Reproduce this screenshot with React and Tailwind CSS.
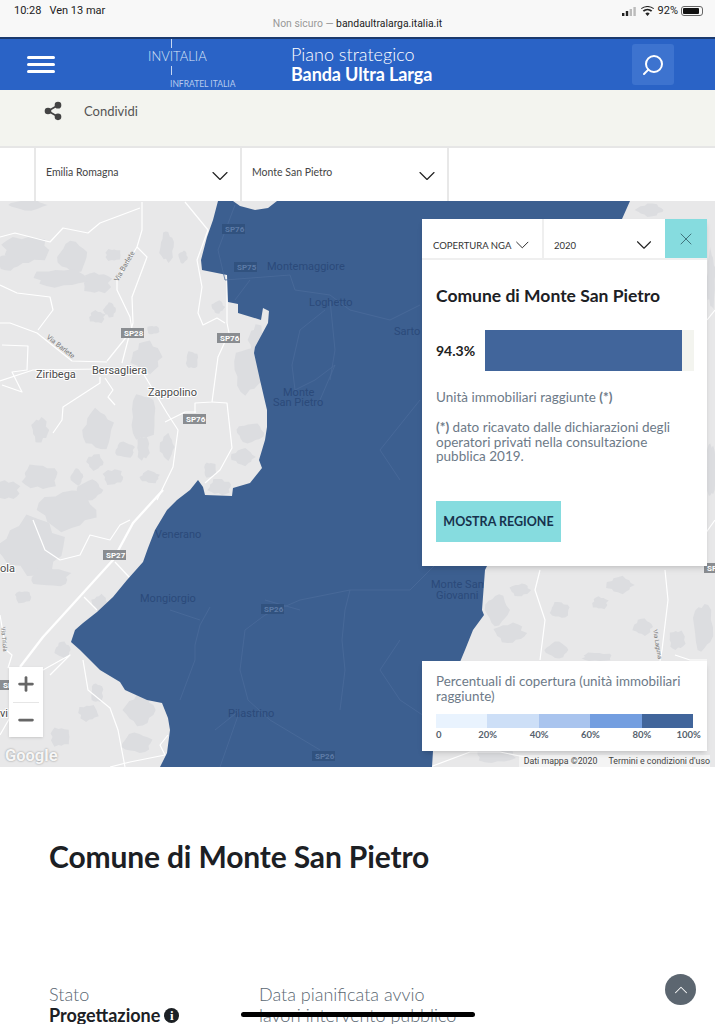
import { ChevronDown, X, Search, Plus, Minus, ChevronUp, Share2 } from 'lucide-react';

const BLUE_AREA =
  '218,201 233,201 240,206 255,210 268,208 277,201 630,201 622,219 600,300 560,400 520,480 490,550 487,566 485,570 482,610 484,615 473,630 465,650 460,662 445,705 433,751 432,767 160,767 167,753 170,730 168,718 162,703 147,700 125,690 120,682 100,670 80,650 71,642 75,630 83,623 97,612 113,597 127,580 143,562 148,548 155,530 167,510 177,500 190,490 198,480 203,487 205,495 232,496 233,488 250,483 262,468 259,460 265,440 267,427 267,410 260,380 254,353 255,347 268,323 269,311 263,308 261,320 238,313 238,304 228,302 227,275 202,270 201,260 207,237 213,220';

// cx, cy, rx, ry of the darker land patches
const BLOBS = [
  [25, 250, 26, 16], [8, 262, 16, 9], [73, 257, 17, 17], [97, 283, 16, 12], [60, 278, 30, 10], [28, 205, 20, 6],
  [167, 247, 8, 17], [113, 255, 9, 7], [183, 257, 5, 7], [110, 310, 7, 8], [97, 317, 9, 7], [153, 330, 7, 5],
  [218, 307, 7, 7], [147, 357, 17, 17], [192, 360, 7, 10], [248, 370, 16, 27], [257, 340, 9, 17], [98, 430, 17, 22],
  [143, 417, 14, 27], [40, 430, 9, 14], [167, 447, 8, 14], [125, 450, 11, 9], [143, 448, 7, 14], [95, 462, 9, 9],
  [77, 477, 7, 9], [40, 477, 20, 14], [113, 477, 11, 9], [90, 490, 14, 11], [150, 477, 11, 7], [7, 490, 14, 11],
  [250, 433, 15, 11], [243, 457, 13, 9], [220, 487, 13, 9], [210, 470, 7, 9], [67, 510, 32, 22], [33, 547, 37, 32],
  [50, 577, 22, 11], [23, 597, 9, 7], [100, 603, 9, 9], [63, 650, 9, 9], [97, 693, 7, 11], [88, 713, 11, 9],
  [140, 710, 17, 17], [137, 743, 17, 11], [60, 737, 11, 11], [510, 633, 17, 11], [557, 650, 13, 9], [600, 603, 9, 7],
  [677, 640, 9, 11], [497, 610, 13, 17], [643, 627, 11, 9], [597, 657, 17, 5], [703, 627, 11, 27], [650, 210, 15, 7],
  [711, 280, 5, 32], [711, 470, 5, 32], [520, 590, 11, 7], [620, 585, 15, 9], [560, 610, 11, 9], [495, 755, 22, 9],
];

function blobPoints([cx, cy, rx, ry], seed) {
  const pts = [];
  for (let i = 0; i < 18; i++) {
    const a = (i / 18) * Math.PI * 2;
    const r = 0.86 + 0.12 * Math.sin(i * 1.3 + seed * 1.7) + 0.07 * Math.cos(i * 3.1 + seed);
    pts.push(`${(cx + Math.cos(a) * rx * r).toFixed(1)},${(cy + Math.sin(a) * ry * r).toFixed(1)}`);
  }
  return pts.join(' ');
}

const ROADS = [
  '142,202 142,230 137,247 147,257 132,297 133,323 128,340 122,363',
  '137,247 117,280 117,290 130,317 132,330 107,361',
  '0,237 15,233 50,242 63,228 88,233 100,223 140,208',
  '0,285 17,293 50,297 53,310 38,330',
  '0,323 10,323 37,333 72,361 107,362',
  '100,369 33,370 0,381',
  '185,202 208,230 197,260 202,287 198,313 203,325 217,318 225,323',
  '227,275 227,323 229,333 218,357 212,402 195,403 195,413',
  '212,402 227,403 232,448 220,470 205,483',
  '143,373 167,413 178,430 173,467 157,500',
  '100,377 100,383 63,407 62,420 53,433',
  '105,378 113,390 108,397 115,405',
  '2,345 28,346 27,370 12,372 22,392 2,385',
  '165,422 185,412 196,412',
  '163,490 133,523 113,560 83,593 43,637 20,667',
  '84,597 97,610',
  '115,562 130,578',
  '33,520 45,550 60,560 80,555 90,535 110,540 120,525 130,520',
  '0,615 6,650 12,655 8,668',
  '83,660 88,690 110,708 118,730 125,767',
  '168,735 160,745 165,755 130,762 110,767',
  '0,735 20,700 43,670 70,655 50,675',
  '540,570 535,590 545,620 540,660',
  '665,570 668,600 662,650 660,661',
  '430,767 470,752 500,752 540,760',
  '707,320 715,310',
  '715,520 690,555 707,560',
  '707,660 690,660 675,655',
];

const BLUE_ROADS = [
  '235,205 218,250 225,280 290,275 295,290 330,295 350,310 390,320 420,305',
  '325,310 300,330 292,365 295,390 315,380 335,365 320,400',
  '330,300 335,350 330,380',
  '210,607 200,625 195,645 195,660 180,700',
  '500,500 410,590 350,590 300,600 265,615 245,630 240,670 248,700 270,720 320,750',
  '350,590 345,610 342,640 345,670 340,710',
  '170,610 200,620',
  '300,610 265,600',
  '215,730 240,710 220,767',
  '400,640 380,670 400,700 430,720',
  '250,280 235,300',
  '420,400 380,450 400,480',
];

const LIGHT_LABELS = [
  { x: 36, y: 378, t: 'Ziribega' },
  { x: 92, y: 374, t: 'Bersagliera' },
  { x: 148, y: 396, t: 'Zappolino' },
  { x: 0, y: 572, t: 'ola' },
  { x: 0, y: 717, t: 'vi' },
];

const DARK_LABELS = [
  { x: 267, y: 270, t: 'Montemaggiore' },
  { x: 309, y: 306, t: 'Loghetto' },
  { x: 394, y: 335, t: 'Sarto' },
  { x: 283, y: 396, t: 'Monte' },
  { x: 273, y: 406, t: 'San Pietro' },
  { x: 155, y: 538, t: 'Venerano' },
  { x: 140, y: 602, t: 'Mongiorgio' },
  { x: 228, y: 717, t: 'Pilastrino' },
  { x: 431, y: 588, t: 'Monte San' },
  { x: 436, y: 599, t: 'Giovanni' },
];

const SHIELDS = [
  { x: 121, y: 328, t: 'SP28' },
  { x: 217, y: 333, t: 'SP76' },
  { x: 183, y: 414, t: 'SP76' },
  { x: 103, y: 550, t: 'SP27' },
  { x: 704, y: 563, t: 'SP' },
  { x: 0, y: 680, t: 'SP' },
];

const DARK_SHIELDS = [
  { x: 222, y: 224, t: 'SP76' },
  { x: 234, y: 262, t: 'SP75' },
  { x: 261, y: 604, t: 'SP26' },
  { x: 312, y: 751, t: 'SP26' },
];

const LEGEND = ['bg-[#e9f3fe]', 'bg-[#cddff7]', 'bg-[#a9c4ee]', 'bg-[#739ee0]', 'bg-[#41659b]'];
const LEGEND_LABELS = ['0', '20%', '40%', '60%', '80%', '100%'];

function MapDrawing() {
  return (
    <svg className="block w-full h-full" viewBox="0 201 715 566">
      <rect x="0" y="201" width="715" height="566" fill="#e8e8e9" />
      {BLOBS.map((b, i) => (
        <polygon key={i} points={blobPoints(b, i)} fill="#dcdde0" />
      ))}
      {ROADS.map((p, i) => (
        <polyline key={i} points={p} fill="none" stroke="#fff" strokeWidth={i === 14 ? 2.4 : 1.2} strokeLinejoin="round" />
      ))}
      {LIGHT_LABELS.map(l => (
        <text key={l.t} x={l.x} y={l.y} fontSize="11" fill="#4a4a4a" stroke="#fff" strokeWidth="2" paintOrder="stroke" fontFamily="Roboto, sans-serif">{l.t}</text>
      ))}
      <text x="0" y="0" transform="translate(46,338) rotate(38)" fontSize="7" fill="#777" fontFamily="Roboto, sans-serif">Via Barlete</text>
      <text x="0" y="0" transform="translate(118,282) rotate(-60)" fontSize="7" fill="#777" fontFamily="Roboto, sans-serif">Via Barlete</text>
      <text x="0" y="0" transform="translate(1,627) rotate(85)" fontSize="6" fill="#777" fontFamily="Roboto, sans-serif">Via Triola</text>
      <text x="0" y="0" transform="translate(653,630) rotate(80)" fontSize="6" fill="#777" fontFamily="Roboto, sans-serif">Via Laguna</text>
      {SHIELDS.map(s => (
        <g key={s.x + '-' + s.y}>
          <rect x={s.x} y={s.y} width="23" height="10" fill="#8a8d91" />
          <text x={s.x + 3} y={s.y + 8} fontSize="8" fontWeight="700" fill="#fff" fontFamily="Roboto, sans-serif">{s.t}</text>
        </g>
      ))}

      <polygon points={BLUE_AREA} fill="#3c5f90" />
      {BLUE_ROADS.map((p, i) => (
        <polyline key={i} points={p} fill="none" stroke="#4a6b9a" strokeWidth="0.8" />
      ))}
      {DARK_LABELS.map(l => (
        <text key={l.t} x={l.x} y={l.y} fontSize="11" fill="#2b4a7a" fontFamily="Roboto, sans-serif">{l.t}</text>
      ))}
      {DARK_SHIELDS.map(s => (
        <g key={s.x + '-' + s.y}>
          <rect x={s.x} y={s.y} width="23" height="10" fill="#31527f" />
          <text x={s.x + 3} y={s.y + 8} fontSize="8" fontWeight="700" fill="#5d7ba7" fontFamily="Roboto, sans-serif">{s.t}</text>
        </g>
      ))}
    </svg>
  );
}

function SelectCell({ label, className }) {
  return (
    <div className={`flex items-center justify-between border-r-2 border-[#e8e8e8] ${className}`}>
      <span className="text-[10.5px] text-[#444] -mt-[4px]">{label}</span>
      <ChevronDown className="w-[28px] h-[28px] text-[#222] mt-[2px]" strokeWidth={1} />
    </div>
  );
}

export default function App() {
  return (
    <div className="relative h-[1024px] overflow-hidden bg-white font-['Lato','Noto_Sans',sans-serif]">
      {/* Safari bar */}
      <div className="h-[37px] bg-[#f8f8f8] relative font-['Roboto',sans-serif]">
        <div className="flex items-center justify-between pl-[14px] pr-[12px] pt-[3px] text-[11px] text-[#222]">
          <div className="flex gap-[8px]">
            <span>10:28</span>
            <span>Ven 13 mar</span>
          </div>
          <div className="flex items-center gap-[3px]">
            <svg width="14" height="9" viewBox="0 0 14 9">
              <rect x="0" y="6" width="2.4" height="3" fill="#222" />
              <rect x="3.8" y="4" width="2.4" height="5" fill="#222" />
              <rect x="7.6" y="2" width="2.4" height="7" fill="#bbb" />
              <rect x="11.4" y="0" width="2.4" height="9" fill="#bbb" />
            </svg>
            <svg width="13" height="10" viewBox="0 0 24 18" className="ml-[2px] mr-[1px]">
              <path d="M12 18 L8 13.5 A6 6 0 0 1 16 13.5 Z M5.5 10.5 A10 10 0 0 1 18.5 10.5 L20.8 8 A13.5 13.5 0 0 0 3.2 8 Z M1 5.5 A17 17 0 0 1 23 5.5 L24 4 A19 19 0 0 0 0 4 Z" fill="#222" />
            </svg>
            <span>92%</span>
            <div className="w-[22px] h-[10px] rounded-[3px] border border-[#666] p-[1px]">
              <div className="h-full w-[90%] bg-[#111] rounded-[1px]" />
            </div>
          </div>
        </div>
        <div className="text-center text-[10.4px] leading-[12px] -mt-[2px] text-[#999]">
          Non sicuro — <span className="text-[#222]">bandaultralarga.italia.it</span>
        </div>
      </div>

      {/* Header */}
      <header className="relative h-[53px] bg-[#2a63c6] border-t-2 border-[#1b3a6e] flex items-center pl-[27px] pr-[41px] overflow-hidden">
        <div className="flex flex-col gap-[4px] w-[28px]">
          <span className="h-[3px] bg-white rounded-full" />
          <span className="h-[3px] bg-white rounded-full" />
          <span className="h-[3px] bg-white rounded-full" />
        </div>
        <div className="relative w-[237px] h-full">
          <span className="absolute left-[93px] top-[8px] text-[13px] font-light text-[#dbe6f7]">INVITALIA</span>
          <span className="absolute left-[116px] top-0 w-px h-[9px] bg-[#c6d7f2]" />
          <span className="absolute left-[116px] top-[27px] w-px h-[9px] bg-[#c6d7f2]" />
          <span className="absolute left-[115px] top-[39px] text-[8.5px] text-[#b7cbee] whitespace-nowrap">INFRATEL ITALIA</span>
        </div>
        <div className="flex-1 text-white text-[18px] leading-[20px] -mt-[2px] -ml-px">
          <div className="font-light">Piano strategico</div>
          <div className="font-bold tracking-[-0.1px]">Banda Ultra Larga</div>
        </div>
        <button className="w-[42px] h-[41px] rounded-[3px] bg-[#3d73cf] flex items-center justify-center text-white">
          <Search className="w-[24px] h-[24px] -scale-x-100" strokeWidth={2} />
        </button>
      </header>

      {/* Share bar */}
      <div className="h-[58px] bg-[#f3f4ef] border-b-2 border-[#e6e6e6] flex items-start pl-[43px] pt-[11px] gap-[21px]">
        <Share2 className="w-[20px] h-[20px] text-[#444] fill-[#444]" strokeWidth={2} />
        <span className="text-[13px] leading-[20px] text-[#555]">Condividi</span>
      </div>

      {/* Selects */}
      <div className="h-[53px] flex bg-white">
        <div className="w-[36px] border-r-2 border-[#e8e8e8]" />
        <SelectCell label="Emilia Romagna" className="w-[206px] pl-[10px] pr-[6px]" />
        <SelectCell label="Monte San Pietro" className="w-[207px] pl-[10px] pr-[6px]" />
      </div>

      {/* Map */}
      <section className="relative h-[566px] overflow-hidden">
        <MapDrawing />

        {/* Zoom controls */}
        <div className="absolute left-[9px] top-[466px] w-[34px] h-[70px] bg-white flex flex-col items-center text-[#666] shadow-sm">
          <div className="flex-1 flex items-center justify-center">
            <Plus className="w-[22px] h-[22px]" strokeWidth={3} />
          </div>
          <div className="w-[26px] h-px bg-[#e6e6e6]" />
          <div className="flex-1 flex items-center justify-center">
            <Minus className="w-[22px] h-[22px]" strokeWidth={3} />
          </div>
        </div>
        <span className="absolute left-[5px] top-[543px] text-[16.5px] font-bold text-white/90 font-['Roboto',sans-serif] [text-shadow:0_0_2px_#888]">Google</span>
        <div className="absolute right-[5px] bottom-0 flex gap-[11px] text-[8.8px] leading-[11px] pt-[1px] pl-[5px] text-[#444] bg-white/50 font-['Roboto',sans-serif]">
          <span>Dati mappa ©2020</span>
          <span>Termini e condizioni d'uso</span>
        </div>

        {/* Info panel */}
        <div className="absolute left-[422px] top-[18px] w-[285px] h-[347px] bg-white shadow-md">
          <div className="flex h-[41px] border-b-2 border-[#efefef]">
            <div className="w-[122px] border-r-2 border-[#efefef] pl-[11px] pr-[8px] pt-[16px] flex items-center justify-between">
              <span className="text-[9.5px] text-[#333] whitespace-nowrap">COPERTURA NGA</span>
              <ChevronDown className="w-[26px] h-[26px] text-[#222] -mt-[3px]" strokeWidth={1} />
            </div>
            <div className="w-[121px] pl-[10px] pr-[8px] pt-[16px] flex items-center justify-between">
              <span className="text-[9.5px] text-[#333]">2020</span>
              <ChevronDown className="w-[26px] h-[26px] text-[#222] -mt-[3px]" strokeWidth={1} />
            </div>
            <div className="w-[42px] bg-[#86dcdf] flex items-center justify-center">
              <X className="w-[20px] h-[20px] text-[#33606a]" strokeWidth={1} />
            </div>
          </div>
          <div className="px-[14px] pt-[26px]">
            <h2 className="text-[17.5px] leading-[20px] font-bold text-[#1c2024]">Comune di Monte San Pietro</h2>
            <div className="flex items-center mt-[24px] -mr-px">
              <span className="w-[49px] text-[14px] font-bold text-[#222]">94.3%</span>
              <div className="flex-1 h-[41px] bg-[#f3f4ef]">
                <div className="h-full bg-[#41659b]" style={{ width: '94.3%' }} />
              </div>
            </div>
            <p className="mt-[18px] text-[13.5px] leading-[17px] text-[#6d7a88]">
              Unità immobiliari raggiunte <b className="font-bold">(*)</b>
            </p>
            <p className="mt-[14px] text-[13.5px] leading-[14.5px] text-[#6d7a88]">
              <b className="font-bold">(*)</b> dato ricavato dalle dichiarazioni degli operatori privati nella consultazione pubblica 2019.
            </p>
            <button className="mt-[37px] w-[125px] h-[41px] pt-[3px] bg-[#86dcdf] text-[12.5px] font-bold text-[#17324d]">MOSTRA REGIONE</button>
          </div>
        </div>

        {/* Legend */}
        <div className="absolute left-[422px] top-[460px] w-[285px] h-[90px] bg-white shadow-md px-[14px] pt-[13px]">
          <p className="text-[13.4px] leading-[15px] text-[#6d7a88]">Percentuali di copertura (unità immobiliari raggiunte)</p>
          <div className="flex h-[14px] mt-[10px] w-[257px]">
            {LEGEND.map(c => (
              <div key={c} className={`flex-1 ${c}`} />
            ))}
          </div>
          <div className="flex w-[266px] text-[9.5px] leading-[12px] mt-px font-bold text-[#56616d]">
            {LEGEND_LABELS.map((l, i) => (
              <span key={l} className={i === 0 ? 'w-[26px]' : i === 5 ? 'ml-[9px]' : 'w-[51.4px] text-center'}>{l}</span>
            ))}
          </div>
        </div>
      </section>

      {/* Below the map */}
      <main className="px-[49px] pt-[69px]">
        <h1 className="text-[30px] leading-[40px] font-bold tracking-[-0.15px] text-[#1c2024]">Comune di Monte San Pietro</h1>
        <div className="flex gap-[62px] mt-[108px] text-[18px] leading-[21px]">
          <div className="w-[148px]">
            <div className="text-[#5a6772] font-light">Stato</div>
            <div className="flex items-center gap-[4px] font-bold text-[#1c2024]">
              Progettazione
              <span className="w-[15px] h-[15px] rounded-full bg-[#1c2024] text-white text-[13px] leading-[15px] text-center font-bold font-['Liberation_Serif',serif]">i</span>
            </div>
          </div>
          <div className="w-[220px] text-[#5a6772] font-light">
            <div>Data pianificata avvio</div>
            <div>lavori intervento pubblico</div>
          </div>
        </div>
      </main>

      {/* Scroll to top */}
      <button className="absolute left-[665px] top-[974px] w-[31px] h-[31px] rounded-full bg-[#5c6670] flex items-center justify-center text-white">
        <ChevronUp className="w-[22px] h-[22px]" strokeWidth={1.1} />
      </button>
      {/* Home indicator */}
      <div className="absolute left-[241px] top-[1012px] w-[234px] h-[5px] rounded-full bg-black" />
    </div>
  );
}
